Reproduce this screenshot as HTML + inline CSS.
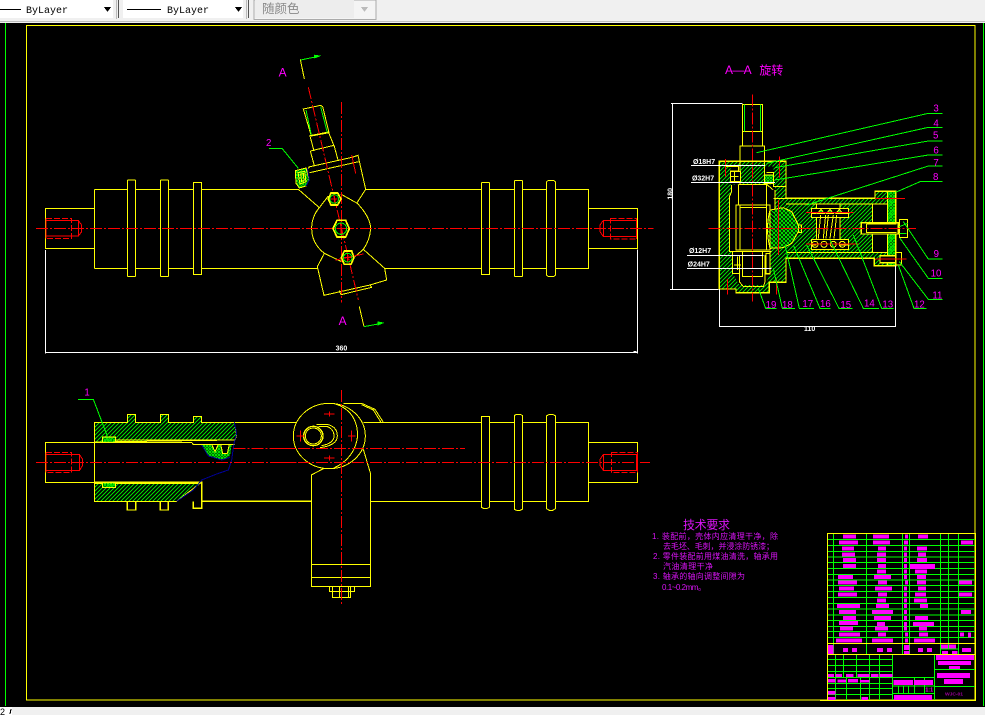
<!DOCTYPE html>
<html><head><meta charset="utf-8"><style>
html,body{margin:0;padding:0;background:#f0f0f0;width:985px;height:715px;overflow:hidden}
svg{position:absolute;left:0;top:0;display:block}
.y{stroke:#ff0}.g{stroke:#0f0}.r{stroke:#f00}.w{stroke:#fff}.b{stroke:#000090}
.dd{stroke-dasharray:36 6 6 6}
.ds{stroke-dasharray:18 6}
text{stroke:none;font-family:"Liberation Sans","Noto Sans CJK SC",sans-serif}
.m{fill:#f0f}
</style></head><body>
<svg width="985" height="715" viewBox="0 0 985 715" fill="none" shape-rendering="crispEdges">
<defs>
<pattern id="h1" width="12" height="12" patternUnits="userSpaceOnUse"><path d="M-3 3L3 -3M0 12L12 0M9 15L15 9" stroke="#00d800" stroke-width="2.6"/></pattern>
<pattern id="h2" width="12" height="12" patternUnits="userSpaceOnUse"><path d="M-3 9L3 15M0 0L12 12M9 -3L15 3" stroke="#00d800" stroke-width="2.6"/></pattern>
<pattern id="h3" width="9" height="9" patternUnits="userSpaceOnUse"><path d="M0 0L9 9M0 9L9 0" stroke="#00e000" stroke-width="2.4"/></pattern>
</defs>
<!-- toolbar -->
<rect width="985" height="715" fill="#f0f0f0" stroke="none"/>
<rect x="0" y="0" width="113" height="18" fill="#fff"/>
<path d="M0 9.5H21" stroke="#000"/>
<text x="26" y="13" style="font-family:'Liberation Mono',monospace;font-size:10px" fill="#000">ByLayer</text>
<path d="M104 7h7l-3.5 5z" fill="#000"/>
<path d="M118.5 0V18" stroke="#555"/><path d="M116.5 0V19" stroke="#bbb"/>
<rect x="123" y="0" width="120" height="18" fill="#fff"/>
<path d="M127 9.5H161" stroke="#000"/>
<text x="167" y="13" style="font-family:'Liberation Mono',monospace;font-size:10px" fill="#000">ByLayer</text>
<path d="M235 7h7l-3.5 5z" fill="#000"/>
<path d="M248.5 0V18" stroke="#555"/><path d="M246.5 0V19" stroke="#bbb"/>
<rect x="254" y="0" width="122" height="19.5" fill="#f4f4f4" stroke="#aaa"/>
<rect x="255" y="0" width="99" height="18" fill="#ededed"/>
<text x="262" y="13" style="font-size:12.5px" fill="#8a8a8a">随颜色</text>
<path d="M361 7h7l-3.5 5z" fill="#bbb"/>
<path d="M0 21.5H985" stroke="#bdbdbd"/>
<rect x="0" y="23" width="985" height="684" fill="#000"/>
<!-- bottom -->
<rect x="0" y="707" width="12" height="8" fill="#fff"/>
<text x="0" y="715" style="font-size:9px" fill="#000">2</text>
<path d="M11 709L10 714" stroke="#000"/>
<path d="M5.5 23V706M983.5 23V706" class="g"/>
<rect x="26.5" y="25.5" width="948.5" height="674.5" class="y"/>

<!-- top view left -->
<g transform="translate(20 90) scale(.33333)" stroke-width="3">
<path class="y" d="M76 355H223V475H76ZM223 298V535M223 298H322M347 298H421M446 298H520M545 298H834M223 535H322M347 535H421M446 535H520M545 535H890"/>
<path class="y" d="M322 274Q322 270 326 270H343Q347 270 347 274V556Q347 560 343 560H326Q322 560 322 556ZM421 274Q421 270 425 270H442Q446 270 446 274V556Q446 560 442 560H425Q421 560 421 556ZM520 277H545V554H520Z"/>
<path class="r" d="M78 392H175V438H78ZM175 392L185 405V425L175 438"/>
<path class="r ds" d="M78 386H155V445H78M78 386V445"/>
<path class="r dd" d="M48 415H1900"/>
<path class="w" d="M76 480V790"/>
</g>

<!-- top view center/right -->
<g transform="translate(270 40) scale(.33333)" stroke-width="3">
<path class="y" d="M287 448H634M659 448H733M758 448H829M857 448H956V685H857M829 685H758M733 685H659M634 685H343M956 505H1103V625H956"/>
<path class="y" d="M634 431Q634 427 638 427H655Q659 427 659 431V704H634ZM733 425Q733 421 737 421H754Q758 421 758 425V706Q758 710 754 710H737Q733 710 733 706ZM829 428Q829 421 843 421Q857 421 857 428V703Q857 710 843 710Q829 710 829 703Z"/>
<path class="r" d="M1000 541H1100V590H1000ZM1000 541L990 555V575L1000 590"/>
<path class="r ds" d="M1022 535H1100V597H1022ZM1100 535V597"/>
<!-- shaft -->
<path class="y" d="M100 207L152 196L158 200L177 278L124 288ZM119 287L176 276M121 333L192 316M120 288L132 333M176 278L193 320M121 333L133 377M192 316L204 360"/>
<path class="g" d="M108 210L124 285M152 200L172 278"/>
<path class="y" d="M116 381L246 352L264 346L287 448M119 398L266 365M119 381L110 388"/>
<!-- blob -->
<path d="M76 392L108 384L118 420L108 438L88 444L78 430Z" fill="url(#h3)" class="y" stroke-width="3"/>
<path class="b" d="M112 384L118 420L108 438"/>
<path class="y" d="M84 398L104 394L108 425L90 432ZM92 402L100 401L102 422L95 424Z"/>
<!-- body -->
<path class="y" d="M85 448L148 503M287 448L260 490M148 503Q125 530 125 565Q125 610 163 640M212 462L262 490Q300 530 302 565Q300 600 280 628M148 503L175 468M163 640L215 665M255 650L280 628M163 640L142 680L162 766L300 735L350 720L344 685M280 628L344 685M208 752L213 764L305 742L300 735M0 448H85M0 685H142"/>
<path class="r dd" d="M115 142L265 780" stroke-dasharray="24 6 6 6"/>
<path class="r dd" d="M214 186V788" stroke-dasharray="24 6 6 6"/>
<path class="r" d="M245 345L257 400M197 660L280 642"/>
<path class="r dd" d="M0 565H1140"/>
<!-- nuts -->
<g class="y" stroke-width="5">
<path d="M183 459H203L213 477L203 495H183L175 477Z"/>
<path d="M201 541H227L238 566L227 591H201L189 566Z"/>
<path d="M223 633H245L252 653L243 673H223L214 653Z"/>
</g>
<circle cx="193" cy="477" r="13" class="g"/><circle cx="213" cy="566" r="17" class="g"/><circle cx="233" cy="653" r="13" class="g"/>
<path class="r" d="M193 466V488M183 477H203M213 550V582M200 566H228M233 642V664M222 653H244"/>
<!-- section arrows -->
<path class="y" d="M103 117L91 58M268 800L282 860"/>
<path class="g" d="M92 60L150 48M282 860L340 849"/>
<path d="M132 44L153 47L133 56ZM322 844L343 848L323 857Z" fill="#0f0" stroke="none"/>
<path class="g" d="M-3 325H36L85 385"/>
<text x="26" y="109" style="font-size:36px" class="m">A</text>
<text x="206" y="855" style="font-size:36px" class="m">A</text>
<text x="-12" y="318" style="font-size:29px" class="m">2</text>
<path class="w" d="M-675 937H1102M1102 628V940M1090 935H1100"/>
<text x="197" y="932" style="font-size:21px;font-weight:bold" fill="#fff">360</text>
</g>

<!-- front view -->
<g transform="translate(30 380) scale(.33333)" stroke-width="3">
<path d="M193 127H292V103H317V127H391V103H415V127H490V109H515V127H613L620 165L615 180L193 186Z" fill="url(#h1)" class="y"/>
<path d="M193 310H510L440 364H193Z" fill="url(#h1)" class="y"/>
<path class="y" d="M46 187H193V307H46ZM193 127V364M613 127H800M193 187H485L490 193H615M258 180H615"/>
<path class="y" stroke-width="4" d="M193 307H515V385H490V364M292 364V390H317V364M391 364V390H415V364M515 364H843"/>
<path d="M515 195H545L555 215L565 193H572L578 220H592L598 195H605L600 228L575 240L535 228Z" fill="url(#h3)"/>
<path class="y" d="M488 193H545L555 215L565 193H572L578 220H592L598 193H615"/>
<path class="b" d="M613 127L620 160L612 190L605 240L595 270L560 282L515 300L490 330L440 364M515 195L535 228L575 240L600 232"/>
<rect x="217" y="171" width="40" height="16" class="y" fill="url(#h3)"/>
<rect x="217" y="308" width="40" height="15" class="y" fill="url(#h3)"/>
<path class="g" d="M144 58H190L233 171"/>
<text x="163" y="46" style="font-size:29px" class="m">1</text>
<path class="r" d="M48 223H148V272H48ZM148 223L158 238V256L148 272"/>
<path class="r ds" d="M48 217H125V278H48M48 217V278"/>
<path class="r dd" d="M18 247H800"/>
<path class="r dd" d="M610 205H800"/>
</g>

<!-- front center/right -->
<g transform="translate(280 390) scale(.33333)" stroke-width="3">
<path class="y" d="M0 97H50M250 97H604M628 97H703M727 97H799M827 97H925V334H827M799 334H727M703 334H628M604 334H272M925 157H1073V277H925M0 334H94"/>
<path class="y" d="M604 79H628V352L622 355H610L604 352ZM703 76L710 73H720L727 76V358L720 361H710L703 358ZM799 78L808 73H818L827 78V356L818 361H808L799 356Z"/>
<ellipse cx="148" cy="138" rx="108" ry="98" class="y"/>
<path class="y" d="M160 40Q232 60 233 138Q225 205 160 235M190 40H245L285 58L310 97M245 44L280 60L303 97"/>
<circle cx="100" cy="138" r="29" class="y" stroke-width="4"/>
<circle cx="100" cy="138" r="24" class="y"/>
<path class="y" d="M110 104H145Q172 112 172 138Q172 166 120 173M115 110H143Q162 118 162 138Q162 160 125 167"/>
<path class="y" d="M94 255L130 236M94 255V589H272V252L250 178M94 523H272M94 562H272M148 589V604H224V589M157 590V622H212V590M157 604H212M178 590V622M205 590V622"/>
<path class="r" d="M132 72H164M148 64V80M62 122V154M50 138H74M214 122V154M204 138H226M132 204H164M148 196V212"/>
<path class="r" d="M970 193H1070V241H970ZM970 193L960 208V226L970 241"/>
<path class="r ds" d="M994 187H1072V248H994ZM1072 187V248"/>
<path class="r dd" d="M0 217H1110"/>
<path class="r dd" d="M0 175H555"/>
<path class="r dd" d="M184 0V645" stroke-dasharray="24 6 6 6"/>
</g>

<!-- section -->
<g transform="translate(660 55) scale(.33333)" stroke-width="3">
<path d="M178 319H378V430H645V409H707V632H643V610H378V682H328V713H228V702H178Z" fill="url(#h1)" class="y" stroke-width="4"/>
<path d="M682 409H707V505H682ZM682 537H707V632H682Z" fill="url(#h3)" class="y"/>
<path d="M211 335H240V388H211ZM314 335H340V388H314ZM215 390H345V450L330 590H210V425ZM218 590H330V657L315 690H238L218 655Z" fill="#000" stroke="none"/>
<path class="y" d="M197 335H235V348H211V380H235M319 352H340V395H378M345 405V460M208 425L215 410V390M208 425V590H228M340 405L320 388M218 590V655H238M330 590V657H315"/>
<path d="M347 447H637V592H378Z" fill="url(#h1)" stroke="none"/>
<path class="y" d="M378 447H637V592H378M340 430H378"/>
<path d="M637 447H682V505H637ZM637 537H682V592H637Z" fill="#000" class="y"/>
<path d="M330 465L370 458L395 470L415 510V530L395 565L370 578L330 580Q315 520 330 465Z" fill="url(#h2)" class="y"/>
<path class="y" d="M415 510H424V532H415"/>
<!-- shaft -->
<path class="y" d="M247 148H307V230H247ZM247 230V273M307 230V273M240 273H314V388H240ZM235 388H320V450M235 388V450M228 450H330V585H228ZM240 457H320M240 450V585M320 450V585M247 590H307V665H247ZM238 600V680L250 695H310L315 680V600M218 590H335"/>
<path fill="#000" stroke="none" d="M250 149H304V229H250Z"/>
<path class="y" d="M247 148H307V230H247Z"/>
<path class="g" d="M253 148V230M302 148V230"/>
<rect x="212" y="350" width="30" height="30" fill="#000" class="y"/>
<rect x="314" y="360" width="26" height="25" fill="url(#h3)" class="y"/>
<rect x="318" y="595" width="12" height="60" class="y"/>
<path class="y" d="M212 365H235M223 350V378M222 630H243M232 605V645"/>
<!-- spring cavity -->
<rect x="470" y="485" width="70" height="68" fill="#000" stroke="none"/>
<rect x="455" y="460" width="110" height="27" class="y" fill="#000"/>
<rect x="455" y="553" width="110" height="30" class="y" fill="#000"/>
<rect x="470" y="447" width="70" height="13" fill="#000" class="y"/>
<path class="y" d="M482 480L475 550M497 480L490 550M505 480L498 550M520 480L510 550M530 480L522 550M540 487V553M470 487V553M455 475H470M540 475H565M455 570H470M540 570H565"/>
<path d="M473 475L483 463L493 475ZM500 475L510 463L520 475ZM528 475L538 463L548 475Z" fill="#0c0" class="y"/>
<circle cx="465" cy="568" r="9" class="y"/><circle cx="492" cy="568" r="9" class="y"/><circle cx="520" cy="568" r="9" class="y"/><circle cx="547" cy="568" r="9" class="y"/>
<!-- bolts -->
<path fill="#000" class="y" stroke-width="4" d="M604 503H715V537H604Z"/>
<path class="y" d="M620 507V533H710M620 507H710M718 494H743V547H718Z"/>
<path class="g" d="M718 515L743 505M718 535H740"/>
<path fill="#000" class="y" stroke-width="4" d="M660 602H707V623H660Z"/>
<path class="y" d="M707 592H725V630H707Z"/>
<!-- red -->
<path class="r dd" d="M277 118V740" stroke-dasharray="24 6 6 6"/>
<path class="r dd" d="M145 520H768"/>
<path class="r" d="M197 312V365M358 305V368M202 672V718M350 672V718M645 430H735M645 612H740M438 472H580M438 567H595M355 435V600"/>
<!-- leaders -->
<path class="g" d="M290 293L805 175H848M320 325L805 217H848M345 338L805 258H848M345 375L805 300H848M440 450L805 333H848M707 412L780 380H848M730 500L805 612H848M720 550L805 670H848M718 620L805 733H848M715 630L762 760H800M580 540L665 760H700M510 555L610 760H657M440 570L537 760H578M400 570L480 760H512M375 570L418 760H462M340 640L367 760H405M295 700L317 760H350"/>
<g class="m" style="font-size:29px">
<text x="820" y="170">3</text><text x="820" y="214">4</text><text x="819" y="251">5</text><text x="820" y="296">6</text><text x="820" y="333">7</text><text x="819" y="375">8</text><text x="821" y="606">9</text><text x="812" y="665">10</text><text x="817" y="731">11</text><text x="762" y="758">12</text><text x="667" y="757">13</text><text x="612" y="754">14</text><text x="541" y="759">15</text><text x="480" y="756">16</text><text x="427" y="756">17</text><text x="366" y="759">18</text><text x="317" y="759">19</text>
</g>
<text x="195" y="57" style="font-size:36px" class="m" textLength="80">A—A</text>
<text x="298" y="59" style="font-size:36px" class="m">旋转</text>
<!-- dims -->
<path class="w" d="M33 145H247M37 145V702M30 703H175M93 331H315M93 382H345M81 601H310M81 640H335M178 702V815H707V632M178 815H707"/>
<g fill="#fff" style="font-size:21px;font-weight:bold">
<text x="99" y="327">Ø18H7</text><text x="96" y="376">Ø32H7</text><text x="87" y="594">Ø12H7</text><text x="83" y="634">Ø24H7</text><text x="432" y="828">110</text>
<text transform="translate(37 434) rotate(-90)">180</text>
</g>
</g>

<!-- tech text -->
<g fill="#d814f4" style="font-size:8px">
<text x="683" y="529" style="font-size:12px" textLength="47">技术要求</text>
<text x="652" y="539" textLength="126">1. 装配前，壳体内应清理干净，除</text>
<text x="663" y="549" textLength="111">去毛坯、毛刺，并浸涂防锈漆；</text>
<text x="653" y="559" textLength="125">2. 零件装配前用煤油清洗，轴承用</text>
<text x="663" y="569" textLength="50">汽油清理干净</text>
<text x="653" y="579" textLength="92">3. 轴承的轴向调整间隙为</text>
<text x="662" y="590" textLength="44">0.1~0.2mm。</text>
</g>

<!-- title block -->
<g transform="translate(820 525) scale(.33333)" stroke-width="3">
<path class="g" d="M22 44H466M22 61H466M22 79H466M22 96H466M22 113H466M22 130H466M22 148H466M22 165H466M22 182H466M22 200H466M22 217H466M22 235H466M22 252H466M22 270H466M22 287H466M22 304H466M22 320H466M22 338H466M362 372H416M40 25V388M139 25V388M247 25V388M268 25V388M362 25V388M386 25V372M416 25V388"/>
<path class="g" d="M46 388V457M70 388V457M109 388V457M148 388V457M178 388V457M22 404H217M22 421H217M22 440H217M22 457H343M217 388V526M46 457V526M79 457V526M121 457V526M148 457V526M178 457V526M22 475H217M22 490H217M22 508H217M217 483H343M217 505H343M235 483V505M250 483V505M265 483V505M283 483V505M313 457V505M343 388V526M343 433H466M343 484H466M283 457V483"/>
<path fill="#f0f" stroke="none" d="M69 29H108V41H69ZM159 29H207V41H159ZM255 29H264V41H255ZM294 29H324V41H294Z
M57 47H114V59H57ZM159 47H210V59H159ZM252 47H264V59H252ZM423 47H459V59H423Z
M66 65H102V77H66ZM174 65H198V77H174ZM252 65H261V77H252ZM291 65H321V77H291Z
M66 82H105V94H66ZM171 82H198V94H171ZM252 82H261V94H252ZM294 82H318V94H294Z
M69 99H108V111H69ZM171 99H198V111H171ZM252 99H261V111H252ZM291 99H321V111H291Z
M69 117H108V129H69ZM174 117H198V129H174ZM252 117H261V129H252ZM270 117H345V132H270Z
M171 134H198V146H171ZM252 134H261V146H252ZM285 134H321V146H285Z
M54 150H99V162H54ZM162 150H213V162H162ZM252 150H261V162H252ZM291 150H318V162H291Z
M54 167H111V179H54ZM174 167H201V179H174ZM255 167H264V179H255ZM291 167H318V179H291ZM417 167H456V179H417Z
M57 185H102V197H57ZM165 185H216V197H165ZM252 185H261V197H252ZM294 185H318V197H294Z
M54 203H111V215H54ZM174 203H201V215H174ZM252 203H261V215H252ZM285 203H318V215H285ZM417 203H456V215H417Z
M171 220H198V232H171ZM252 220H261V232H252ZM282 220H321V232H282Z
M51 237H120V249H51ZM168 237H207V249H168ZM252 237H261V249H252ZM300 237H324V249H300Z
M57 255H108V267H57ZM156 255H219V267H156ZM252 255H261V267H252ZM423 255H453V267H423Z
M69 273H108V285H69ZM162 273H213V285H162ZM252 273H261V285H252ZM285 273H324V285H285Z
M57 288H114V300H57ZM171 291H195V303H171ZM252 291H261V303H252ZM279 291H342V303H279Z
M60 305H99V317H60ZM165 305H204V317H165ZM252 305H261V317H252ZM297 305H321V317H297Z
M57 323H120V335H57ZM174 323H198V335H174ZM255 323H264V335H255ZM297 323H324V335H297ZM420 323H432V335H420ZM444 323H453V338H444Z
M48 341H126V353H48ZM156 341H219V353H156ZM255 341H264V353H255ZM282 341H345V353H282Z
M24 360H40V387H24ZM69 369H84V381H69ZM96 369H111V381H96ZM171 369H189V381H171ZM201 369H216V381H201ZM252 360H268V375H252ZM252 378H268V388H252ZM294 369H309V381H294ZM321 369H336V381H321ZM363 358H384V370H363ZM387 358H408V370H387ZM366 378H384V388H366ZM396 378H412V388H396ZM426 369H453V381H426Z
M22 447H42V456H22ZM46 447H66V456H46ZM78 447H100V456H78ZM112 447H148V456H112ZM153 447H175V456H153ZM178 447H217V456H178Z
M22 462H46V473H22ZM52 464H78V473H52ZM84 462H114V473H84ZM120 465H148V473H120ZM22 498H46V508H22ZM22 516H46V526H22ZM124 516H144V526H124Z
M220 465H279V480H220ZM282 465H339V480H282ZM222 510H336V526H222Z
M348 390H462V405H348ZM354 408H453V420H354ZM387 423H420V432H387ZM351 444H450V459H351ZM372 462H429V477H372Z"/>
<path class="y" d="M22 25H466V526H22ZM22 355H466M22 388H466"/>
<path d="M0 526H22" class="y"/>
<text x="316" y="500" style="font-size:16px;font-weight:bold" fill="#f0f">1:1</text>
<text x="375" y="512" style="font-size:15px;font-weight:bold" fill="#a000a0" textLength="54">WJC-01</text>
</g>
</svg>
</body></html>
